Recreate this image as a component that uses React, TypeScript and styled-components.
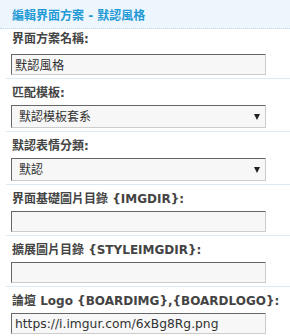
import styled, { createGlobalStyle } from "styled-components";

const GlobalStyle = createGlobalStyle`
  html, body {
    margin: 0;
    padding: 0;
    background: #fff;
  }
  body {
    font-family: "DejaVu Sans", "Noto Sans CJK TC", sans-serif;
    font-size: 12px;
  }
`;

const Panel = styled.div`
  width: 290px;
`;

const Header = styled.div`
  height: 28px;
  display: flex;
  align-items: center;
  padding-left: 12px;
  background: #eef6fd;
  border-bottom: 1px dotted #b9d6ee;
  color: #1f9ad6;
  font-weight: bold;
  font-size: 12px;
`;

const Row = styled.div<{ $first?: boolean }>`
  margin-left: 6px;
  padding: ${({ $first }) => ($first ? "2px 24px 3px 5px" : "6px 24px 3px 5px")};
  border-top: ${({ $first }) => ($first ? "none" : "1px solid #dde9f6")};
`;

const Label = styled.div<{ $gap?: number }>`
  height: 16px;
  line-height: 16px;
  margin-bottom: ${({ $gap }) => $gap ?? 4}px;
  padding-left: 1px;
  color: #444;
  font-weight: bold;
  font-size: 12px;
  white-space: nowrap;
`;

const TextInput = styled.input`
  box-sizing: border-box;
  display: block;
  width: 255px;
  height: 21px;
  margin: 0;
  padding: 0 3px;
  background: #f7f7f7;
  border: 1px solid #ccc;
  border-top-color: #666;
  border-left-color: #666;
  color: #333;
  font-family: "DejaVu Sans", "Noto Sans CJK TC", sans-serif;
  font-size: 12.3px;
  outline: none;
`;

const SelectWrap = styled.div`
  position: relative;
  width: 255px;
`;

const Select = styled.select`
  box-sizing: border-box;
  display: block;
  width: 255px;
  height: 23px;
  margin: 0;
  padding: 0 20px 0 7px;
  appearance: none;
  background: #f7f7f7;
  border: 1px solid #ccc;
  border-top-color: #666;
  border-left-color: #666;
  border-radius: 0;
  color: #333;
  font-family: "DejaVu Sans", "Noto Sans CJK TC", sans-serif;
  font-size: 12px;
  outline: none;
`;

const Arrow = styled.span`
  position: absolute;
  right: 6px;
  top: 9px;
  width: 0;
  height: 0;
  border-left: 3.5px solid transparent;
  border-right: 3.5px solid transparent;
  border-top: 6px solid #222;
  pointer-events: none;
`;

export default function App() {
  return (
    <Panel>
      <GlobalStyle />
      <Header>編輯界面方案 - 默認風格</Header>

      <Row $first>
        <Label $gap={7}>界面方案名稱:</Label>
        <TextInput defaultValue="默認風格" />
      </Row>

      <Row>
        <Label>匹配模板:</Label>
        <SelectWrap>
          <Select defaultValue="default">
            <option value="default">默認模板套系</option>
          </Select>
          <Arrow />
        </SelectWrap>
      </Row>

      <Row>
        <Label>默認表情分類:</Label>
        <SelectWrap>
          <Select defaultValue="default">
            <option value="default">默認</option>
          </Select>
          <Arrow />
        </SelectWrap>
      </Row>

      <Row>
        <Label>界面基礎圖片目錄 {"{IMGDIR}"}:</Label>
        <TextInput defaultValue="" />
      </Row>

      <Row>
        <Label>擴展圖片目錄 {"{STYLEIMGDIR}"}:</Label>
        <TextInput defaultValue="" />
      </Row>

      <Row>
        <Label>論壇 Logo {"{BOARDIMG},{BOARDLOGO}"}:</Label>
        <TextInput defaultValue="https://i.imgur.com/6xBg8Rg.png" />
      </Row>
    </Panel>
  );
}
